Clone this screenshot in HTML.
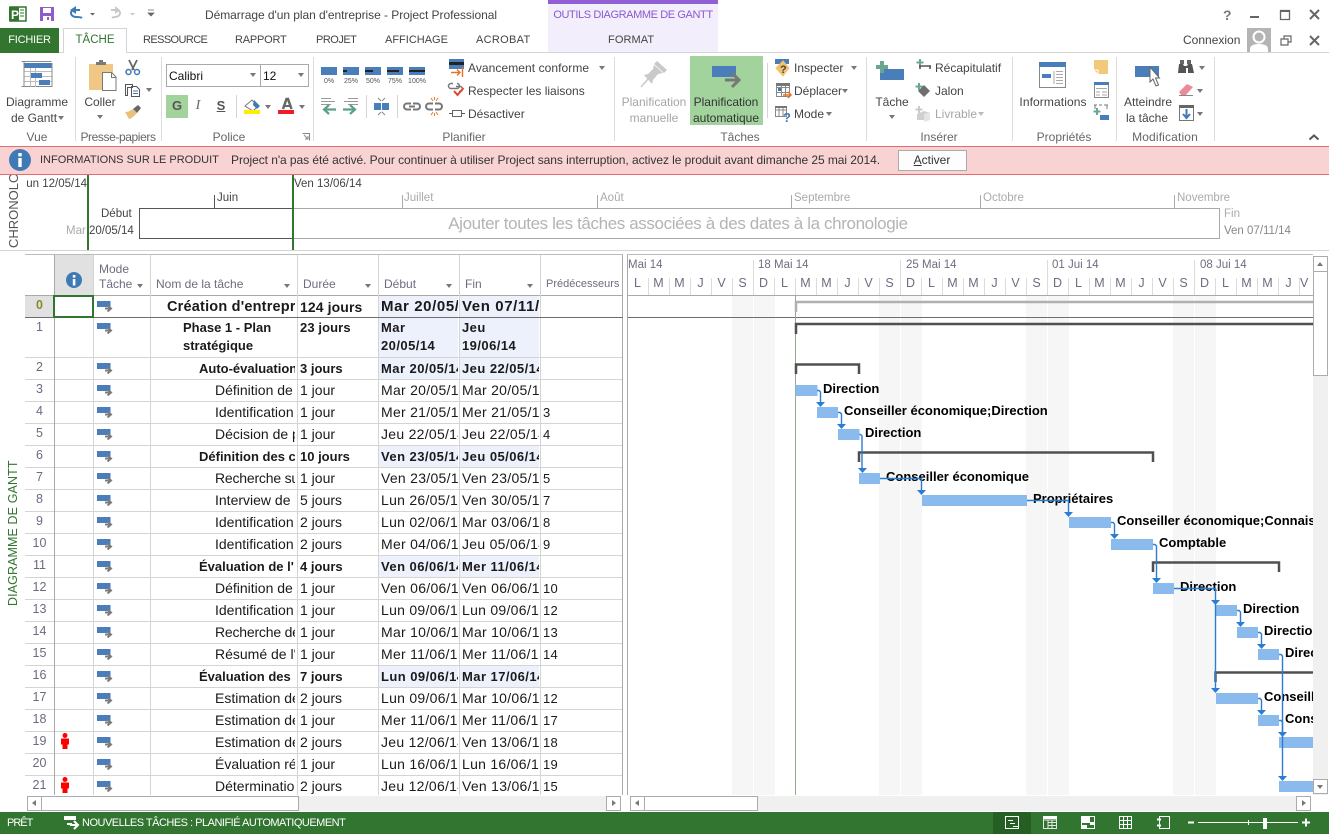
<!DOCTYPE html>
<html lang="fr"><head><meta charset="utf-8"><title>Project Professional</title>
<style>
html,body{margin:0;padding:0;background:#fff}
body{width:1329px;height:834px;overflow:hidden;position:relative;font:12px "Liberation Sans",sans-serif;color:#444}
.t{position:absolute;white-space:nowrap;line-height:16px;height:16px}
.c{text-align:center;transform:translateX(-50%)}
.b{position:absolute}
.a{position:absolute;width:0;height:0;border:3.5px solid transparent;border-top:4px solid #777;border-bottom:0}
svg{position:absolute;overflow:visible}
.g{color:#666;top:129px}
.sep{position:absolute;top:57px;height:84px;width:1px;background:#dcdcdc}
.tab{top:32px;color:#444;font-size:11px}
.r{position:absolute;left:25px;width:598px;height:22px;font-size:14px;color:#1a1a1a}
.r::after{content:"";position:absolute;left:0;right:0;bottom:0;height:1px;background:#d4d4d4}
.r>div{position:absolute;top:0;height:21px;line-height:21px;white-space:nowrap;overflow:hidden}
.r>div.n{left:0;width:29px;text-align:center;color:#6b6b80;font-size:12.5px;line-height:19px;font-weight:normal}
.mi{left:72px;top:5px;width:16px;height:11px}
.na{left:125px;width:145px}
.du{left:275px;width:78px}
.de{left:354px;padding-left:2px;width:77px;letter-spacing:.28px}
.fi{left:435px;padding-left:2px;width:77px;letter-spacing:.28px}
.pr{left:518px;width:70px;font-size:13px;letter-spacing:.3px}
.bd{font-weight:bold;font-size:13px}
.bd .de,.bd .fi{font-size:13px;letter-spacing:.45px;background:#edf1fc}
.v{position:absolute;top:255px;height:540px;width:1px;background:#d4d4d4}
.hd{color:#6d6d80;top:276px}
.dl{position:absolute;top:275px;width:21px;text-align:center;color:#6d6d80;font-size:12.5px;line-height:16px}
.tk{position:absolute;top:278px;height:17px;width:1px;background:#dcdcdc}
.wk{position:absolute;top:257px;white-space:nowrap;color:#6d6d80;line-height:16px;font-size:11.5px}
.sb{position:absolute;background:#fff;border:1px solid #ababab;box-sizing:border-box}
.st{position:absolute;color:#fff;white-space:nowrap;line-height:16px;top:815px;font-size:11px}
.gl{font:bold 13px "Liberation Sans",sans-serif;fill:#000}
</style></head><body>

<svg width="0" height="0" style="position:absolute"><defs>
<symbol id="m" viewBox="0 0 16 11"><rect x="0" y="0" width="13.5" height="6" fill="#4a7ebb"/><path d="M8 7.500h5M10.500 4.500l3.500 3-3.500 3" fill="none" stroke="#7c7c7c" stroke-width="2"/></symbol>
<symbol id="p" viewBox="0 0 12 16"><circle cx="6" cy="2.500" r="2.500" fill="#f00"/><path d="M2 5.500h8v6H8.500v4.500h-5V11.500H2z" fill="#f00"/></symbol>
</defs></svg>

<!-- title bar -->
<svg style="left:0;top:0" width="160" height="28">
<rect x="10" y="7" width="16" height="14" fill="#fff" stroke="#31752f" stroke-width="1.500"/><rect x="9" y="7" width="10" height="14" fill="#31752f"/>
<text x="11" y="19" font-size="12" font-weight="bold" fill="#fff" font-family="Liberation Sans">P</text><path d="M20 10h4M20 13h4M20 16h4" stroke="#31752f"/>
<path d="M40 7h14v14H40z" fill="#8e5dc9"/><rect x="43" y="8" width="8" height="5" fill="#fff"/><rect x="43" y="16" width="8" height="5" fill="#fff"/><rect x="47" y="17" width="2" height="3" fill="#8e5dc9"/>
<path d="M82 18c-1 -1 -4 -1 -6 -1c-3 0 -5 -2 -5 -4c0-2 2-3 4-3h5" fill="none" stroke="#3f7ab5" stroke-width="2"/><path d="M75 6l-6 4 6 4z" fill="#3f7ab5" transform="translate(1,0)"/>
<path d="M90 13h5l-2.500 2.500z" fill="#666"/>
<path d="M112 18c1 -1 2 -1 3 -1c3 0 5 -2 5 -4c0-2 -2-3 -4-3h-5" fill="none" stroke="#c8c8c8" stroke-width="2"/><path d="M115 6l5 4 -5 4z" fill="#c8c8c8"/>
<path d="M130 13h5l-2.500 2.500z" fill="#c8c8c8"/>
<path d="M148 10h6M148 13h6l-3 3z" fill="#666" stroke="#666" stroke-width=".7"/>
</svg>
<div class="t" style="left:205px;top:7px;letter-spacing:-.05px;font-size:12px">Démarrage d'un plan d'entreprise - Project Professional</div>
<div class="b" style="left:548px;top:0;width:170px;height:52px;background:#f3eefb"></div>
<div class="b" style="left:548px;top:0;width:170px;height:4px;background:#8f5fd3"></div>
<div class="t c" style="left:633px;top:7px;color:#8a5ad0;font-size:11px;letter-spacing:-.4px">OUTILS DIAGRAMME DE GANTT</div>
<svg style="left:1215px;top:5px" width="114" height="45" fill="none" stroke="#666" stroke-width="2">
<text x="8" y="15" font-size="14" font-weight="bold" fill="#777" stroke="none" font-family="Liberation Sans">?</text>
<path d="M35 12h9"/><path d="M65.500 5.500h9v9h-9z" stroke-width="1.300"/><path d="M65 6h10" />
<path d="M95 5l9 9M104 5l-9 9"/>
<path d="M66 34h7v6h-7zM69 34v-3h7v6h-3" stroke-width="1.200"/><path d="M95 31l9 9M104 31l-9 9"/></svg>
<!-- tabs -->
<div class="b" style="left:0;top:52px;width:1329px;height:1px;background:#d4d4d4"></div>
<div class="b" style="left:0;top:28px;width:59px;height:25px;background:#31752f"></div>
<div class="t c tab" style="left:29.500px;color:#fff;letter-spacing:-.2px">FICHIER</div>
<div class="b" style="left:63px;top:28px;width:64px;height:25px;border:1px solid #d4d4d4;border-bottom:0;background:#fff;box-sizing:border-box"></div>
<div class="t c tab" style="left:95px;color:#31752f;font-size:11.500px">TÂCHE</div>
<div class="t tab" style="left:143px;letter-spacing:-.6px">RESSOURCE</div>
<div class="t tab" style="left:235px;letter-spacing:-.2px">RAPPORT</div>
<div class="t tab" style="left:316px;letter-spacing:-.5px">PROJET</div>
<div class="t tab" style="left:385px">AFFICHAGE</div>
<div class="t tab" style="left:476px;letter-spacing:.3px">ACROBAT</div>
<div class="t tab" style="left:608px;letter-spacing:.1px">FORMAT</div>
<div class="t" style="left:1183px;top:32px">Connexion</div>
<svg style="left:1247px;top:28px" width="24" height="24"><rect width="24" height="24" fill="#b4b4b4"/><circle cx="12" cy="9" r="5.500" fill="none" stroke="#fff" stroke-width="2"/><path d="M3 24v-3c0-4 5-5 9-5s9 1 9 5v3z" fill="#fff"/></svg>

<!-- ribbon separators -->
<div class="sep" style="left:75px"></div><div class="sep" style="left:161px"></div><div class="sep" style="left:313px"></div><div class="sep" style="left:614px"></div><div class="sep" style="left:866px"></div><div class="sep" style="left:1012px"></div><div class="sep" style="left:1116px"></div><div class="sep" style="left:1214px"></div>
<div class="t g c" style="left:37px">Vue</div>
<div class="t g c" style="left:118px;letter-spacing:-.4px">Presse-papiers</div>
<div class="t g c" style="left:229px">Police</div>
<div class="t g c" style="left:464px">Planifier</div>
<div class="t g c" style="left:740px">Tâches</div>
<div class="t g c" style="left:939px">Insérer</div>
<div class="t g c" style="left:1064px">Propriétés</div>
<div class="t g c" style="left:1165px;letter-spacing:.15px">Modification</div>

<!-- Vue -->
<svg style="left:21px;top:61px" width="32" height="28" fill="none"><path d="M.5 .5h30M3 .500v25M.5 25.500h30" stroke="#8a8a8a"/><rect x="3.500" y="2" width="27.500" height="5" fill="#4a7ebb"/><path d="M3.500 10.500h27M3.500 15.500h27M3.500 20.500h27M9.500 7v19M14.500 7v19" stroke="#bdbdbd"/><rect x="10" y="12" width="11" height="5" fill="#4a7ebb"/><rect x="18" y="19" width="11" height="5" fill="#4a7ebb"/><path d="M31 2v24" stroke="#8a8a8a"/></svg>
<div class="t c" style="left:37px;top:94px">Diagramme</div>
<div class="t" style="left:11px;top:110px">de Gantt</div><div class="a" style="left:58px;top:116px"></div>

<!-- Presse-papiers -->
<svg style="left:88px;top:59px" width="56" height="62">
<rect x="1" y="5" width="24" height="26" fill="#efc885"/><path d="M8 6V3h3V1h4v2h3v3z" fill="#7a7a7a"/>
<path d="M14.500 13.500h9l4.500 4.500v13.500h-13.500z" fill="#fff" stroke="#7a7a7a"/><path d="M23.500 13.500v5h4.500" fill="none" stroke="#7a7a7a"/>
<path d="M41 1l5 10M49 1l-5 10" stroke="#666" stroke-width="1.800" fill="none"/><circle cx="40.500" cy="13" r="2.500" fill="none" stroke="#3f7ab5" stroke-width="1.500"/><circle cx="49" cy="13" r="2.500" fill="none" stroke="#3f7ab5" stroke-width="1.500"/>
<path d="M37.500 25.500h7v3h-5v8h-2zM43.500 27.500h5l3 3v7h-8z" fill="#fff" stroke="#555"/><path d="M45 32h5M45 34.500h5" stroke="#3f7ab5"/>
<path d="M45 50l5-4 3 3-4 5z" fill="#666"/><path d="M37 53c3 0 5-1 8-3l4 4c-3 3-6 6-8 6z" fill="#e9c07b"/>
</svg>
<div class="t c" style="left:100px;top:94px">Coller</div><div class="a" style="left:97px;top:115px"></div>
<div class="a" style="left:146px;top:88px"></div>

<!-- Police -->
<div class="b" style="left:166px;top:64px;width:95px;height:23px;border:1px solid #aaa;box-sizing:border-box"></div>
<div class="b" style="left:260px;top:64px;width:49px;height:23px;border:1px solid #aaa;box-sizing:border-box"></div>
<div class="t" style="left:169px;top:68px;color:#111">Calibri</div><div class="a" style="left:250px;top:73px"></div>
<div class="t" style="left:263px;top:68px;color:#111">12</div><div class="a" style="left:298px;top:73px"></div>
<div class="b" style="left:166px;top:95px;width:22px;height:23px;background:#a3d39c"></div>
<div class="t c" style="left:177px;top:98px;font-weight:bold;color:#555;font-size:13px">G</div>
<div class="t c" style="left:198px;top:98px;font-style:italic;font-family:'Liberation Serif',serif;font-size:14px;color:#666">I</div>
<div class="t c" style="left:221px;top:98px;font-weight:bold;text-decoration:underline;color:#555;font-size:13px">S</div>
<div class="b" style="left:236px;top:95px;width:1px;height:23px;background:#d4d4d4"></div>
<svg style="left:243px;top:97px" width="56" height="22">
<path d="M2 9l7-6 6 6-5 5z" fill="#fff" stroke="#777"/><path d="M11 3l6 6-3 3-4-4z" fill="#3f7ab5"/><rect x="1" y="13" width="16" height="4" fill="#ffed00"/>
<path d="M40 12l3.500-10h1.500l3.500 10" fill="none" stroke="#666" stroke-width="2.500"/><path d="M41 9h6" stroke="#666" stroke-width="2"/><rect x="35" y="13" width="16" height="4" fill="#ee1c25"/></svg>
<div class="a" style="left:265px;top:105px"></div><div class="a" style="left:299px;top:105px"></div>
<svg style="left:302px;top:133px" width="8" height="8"><path d="M.5 .5h7v7M2 2l4 4M6 3v3H3" fill="none" stroke="#888"/></svg>

<!-- Planifier -->
<svg style="left:320px;top:66px" width="108" height="20">
<g fill="#4a7ebb"><rect x="1" y="1" width="16" height="8"/><rect x="23" y="1" width="16" height="8"/><rect x="45" y="1" width="16" height="8"/><rect x="67" y="1" width="16" height="8"/><rect x="89" y="1" width="16" height="8"/></g>
<g fill="#222"><rect x="23" y="4" width="4" height="2"/><rect x="45" y="4" width="8" height="2"/><rect x="67" y="4" width="12" height="2"/><rect x="89" y="4" width="16" height="2"/></g>
<g font-size="7" fill="#555" text-anchor="middle" font-family="Liberation Sans"><text x="9" y="17">0%</text><text x="31" y="17">25%</text><text x="53" y="17">50%</text><text x="75" y="17">75%</text><text x="97" y="17">100%</text></g></svg>
<svg style="left:320px;top:97px" width="125" height="18" fill="none">
<path d="M1 1.500h10M1 4.500h14M1 7.500h10" stroke="#999"/><path d="M16 12.500H5M9 8l-5 4.500 5 4.500" stroke="#5c9f8a" stroke-width="2.200"/>
<path d="M28 1.500h10M24 4.500h14M28 7.500h10" stroke="#999"/><path d="M23 12.500h11M30 8l5 4.500-5 4.500" stroke="#5c9f8a" stroke-width="2.200"/>
<rect x="54" y="6" width="7" height="7" fill="#4a7ebb"/><rect x="62" y="6" width="7" height="7" fill="#4a7ebb"/><path d="M58 1l3 3M65 1l-3 3M58 18l3-3M65 18l-3-3" stroke="#888"/>
<path d="M91 6.500h-4a3 3 0 000 6h4M93 6.500h4a3 3 0 010 6h-4M89 9.500h6" stroke="#777" stroke-width="2"/>
<path d="M113 6.500h-4a3 3 0 000 6h4M115 6.500h4a3 3 0 010 6h-4" stroke="#777" stroke-width="2"/><path d="M111 1l2 3M118 1l-2 3M111 18l2-3M118 18l-2-3M114.500 0v3M114.500 16v3" stroke="#e97b24"/>
</svg>
<div class="b" style="left:366px;top:95px;width:1px;height:23px;background:#d4d4d4"></div>
<div class="b" style="left:397px;top:95px;width:1px;height:23px;background:#d4d4d4"></div>
<svg style="left:448px;top:58px" width="18" height="65" fill="none">
<rect x="1" y="1" width="15" height="10" fill="#4a7ebb"/><rect x="1" y="4" width="15" height="3" fill="#222"/><path d="M3 14.500h9M9 11.500l3 3-3 3M14.500 9v10" stroke="#e9721f" stroke-width="1.400"/>
<path d="M5 25.500h-2a2.500 2.500 0 000 5h6a2.500 2.500 0 000-5M8 28.500h4a2.500 2.500 0 010 5h-1" stroke="#777" stroke-width="1.500"/><path d="M6 33l3.500 4 6-7" stroke="#e2432a" stroke-width="2"/>
<path d="M1 55.500h4M13 55.500h4" stroke="#555"/><rect x="4.500" y="52.500" width="9" height="6" stroke="#666"/></svg>
<div class="t" style="left:468px;top:60px;letter-spacing:.07px">Avancement conforme</div><div class="a" style="left:599px;top:66px"></div>
<div class="t" style="left:468px;top:83px">Respecter les liaisons</div>
<div class="t" style="left:468px;top:106px">Désactiver</div>

<!-- Tâches -->
<svg style="left:640px;top:61px" width="28" height="28"><path d="M14 4l9 8-5 1-5 6-1 4-8-9 4-1 5-5z" fill="#c9c9c9"/><path d="M8 18l-7 8" stroke="#c9c9c9" stroke-width="1.500"/><path d="M17 0l10 9-3 3-10-9z" fill="#c9c9c9"/></svg>
<div class="t c" style="left:654px;top:94px;color:#a6a6a6">Planification</div>
<div class="t c" style="left:654px;top:110px;color:#a6a6a6">manuelle</div>
<div class="b" style="left:690px;top:56px;width:73px;height:69px;background:#a3d39c"></div>
<svg style="left:712px;top:66px" width="30" height="22"><rect width="24" height="11" fill="#4a7ebb"/><path d="M13 14h13M20 7l7 7-7 7" fill="none" stroke="#777" stroke-width="3"/></svg>
<div class="t c" style="left:726px;top:94px;color:#333">Planification</div>
<div class="t c" style="left:726px;top:110px;color:#333">automatique</div>
<div class="b" style="left:767px;top:63px;width:1px;height:55px;background:#d4d4d4"></div>
<svg style="left:774px;top:58px" width="18" height="66" fill="none">
<path d="M1 1h14v5H1z" fill="#4a7ebb"/><path d="M9 3l6 7-6 8-7-8z" fill="#f3c16e" stroke="#f3c16e"/><text x="6" y="15" font-size="11" font-weight="bold" fill="#444" font-family="Liberation Sans">?</text>
<path d="M2.500 25.500h13v13h-13zM2.500 29.500h13M2.500 34.500h13M7.500 25.500v13M11.500 25.500v13" stroke="#888"/><rect x="2" y="25" width="14" height="3" fill="#777"/><rect x="4" y="30" width="3" height="3" fill="#3f7ab5"/><path d="M9 37h8M14 34l3 3-3 3" stroke="#e9721f" stroke-width="1.500"/>
<path d="M1.500 48.500h11v10h-11zM1.500 52h11M5 48.500v10M9 48.500v10" stroke="#888"/><rect x="1" y="48" width="12" height="2" fill="#777"/><text x="9" y="64" font-size="13" font-weight="bold" fill="#3f7ab5" font-family="Liberation Sans">?</text></svg>
<div class="t" style="left:794px;top:60px">Inspecter</div><div class="a" style="left:851px;top:66px"></div>
<div class="t" style="left:794px;top:83px">Déplacer</div><div class="a" style="left:842px;top:89px"></div>
<div class="t" style="left:794px;top:106px">Mode</div><div class="a" style="left:826px;top:112px"></div>

<!-- Insérer -->
<svg style="left:876px;top:60px" width="30" height="22"><rect x="4" y="9" width="24" height="11" fill="#4a7ebb"/><path d="M6 1v12M0 7h12" stroke="#6aa792" stroke-width="4"/></svg>
<div class="t c" style="left:892px;top:94px">Tâche</div><div class="a" style="left:889px;top:115px"></div>
<svg style="left:915px;top:58px" width="20" height="66" fill="none">
<path d="M5 1v7M1.500 4.500h7" stroke="#6aa792" stroke-width="2"/><path d="M4 8h12M5 8v3M15 8v3" stroke="#555" stroke-width="1.600"/>
<path d="M4 25v7M.5 28.500h7" stroke="#6aa792" stroke-width="2"/><path d="M9 27l6 6-6 6-6-6z" fill="#6f6f6f"/>
<path d="M4 48v7M.5 51.500h7" stroke="#c9c9c9" stroke-width="2"/><path d="M2 56l7-3 6 2v7H2z" fill="#cfcfcf"/><path d="M9 56l6-2v8l-6 2z" fill="#e4e4e4"/></svg>
<div class="t" style="left:935px;top:60px">Récapitulatif</div>
<div class="t" style="left:935px;top:83px">Jalon</div>
<div class="t" style="left:935px;top:106px;color:#a6a6a6">Livrable</div><div class="a" style="left:978px;top:112px;border-top-color:#bbb"></div>

<!-- Propriétés -->
<svg style="left:1038px;top:61px" width="30" height="28" fill="none"><rect x="1.500" y="1.500" width="26" height="25" stroke="#888"/><rect x="1" y="1" width="27" height="5" fill="#4a7ebb"/><rect x="4" y="13" width="9" height="4" fill="#4a7ebb"/><path d="M16 10v13M18 10.500h7M18 13.500h7M18 16.500h7M18 19.500h7M18 22.500h7" stroke="#aaa"/></svg>
<div class="t c" style="left:1053px;top:94px;letter-spacing:.1px">Informations</div>
<svg style="left:1093px;top:59px" width="18" height="63" fill="none">
<path d="M1 1h14v14H5l-4-4z" fill="#f0c97d"/><path d="M1 11h4v4" stroke="#fff" />
<rect x="1.500" y="23.500" width="14" height="15" stroke="#888" fill="#fff"/><rect x="1" y="23" width="15" height="3" fill="#4a7ebb"/><path d="M3 29.500h11M3 33h4M9 33h5M3 36h4M9 36h5" stroke="#aaa"/>
<path d="M1 46h3M6 46h3M11 46h4M2 46v4M14 46v4" stroke="#777"/><path d="M4 49v7M.500 52.500h7" stroke="#6aa792" stroke-width="2"/><rect x="7" y="56" width="9" height="5" fill="#4a7ebb"/></svg>

<!-- Modification -->
<svg style="left:1135px;top:66px" width="28" height="22"><rect width="24" height="11" fill="#4a7ebb"/><path d="M15 1v15l3-3 3 7 2.500-1-3-7h4z" fill="#fff" stroke="#666"/></svg>
<div class="t c" style="left:1148px;top:94px">Atteindre</div><div class="t c" style="left:1147px;top:110px">la tâche</div>
<svg style="left:1177px;top:59px" width="20" height="64" fill="none">
<path d="M2 5h4l1 2h3l1-2h4l2 9H11V9H9v5H1z" fill="#555"/><rect x="3" y="1" width="4" height="4" fill="#666"/><rect x="10" y="1" width="4" height="4" fill="#666"/>
<path d="M2 33l8-8 6 3-8 9H5z" fill="#ea8a9a"/><path d="M2 36.500h14" stroke="#888"/>
<rect x="2.500" y="46.500" width="14" height="15" stroke="#777" fill="#fff"/><rect x="2" y="46" width="15" height="3" fill="#666"/><path d="M9.500 50v8M6 55l3.500 4 3.500-4" stroke="#3f7ab5" stroke-width="2"/></svg>
<div class="a" style="left:1199px;top:66px"></div><div class="a" style="left:1197px;top:89px"></div><div class="a" style="left:1197px;top:112px"></div>
<svg style="left:1308px;top:133px" width="12" height="8"><path d="M1.500 6.500l4.500-4 4.500 4" fill="none" stroke="#555" stroke-width="2"/></svg>

<!-- banner -->
<div class="b" style="left:0;top:146px;width:1329px;height:29px;background:#f9d3d3;border-top:1px solid #e46c6c;border-bottom:1px solid #e46c6c;box-sizing:border-box"></div>
<svg style="left:9px;top:149px" width="22" height="22"><circle cx="11" cy="11" r="11" fill="#3f7ab5"/><rect x="9.300" y="4" width="3.400" height="3.400" fill="#fff"/><rect x="9.300" y="9" width="3.400" height="9" fill="#fff"/></svg>
<div class="t" style="left:40px;top:152px;color:#333;font-size:11px">INFORMATIONS SUR LE PRODUIT</div>
<div class="t" style="left:231px;top:152px;color:#333;letter-spacing:-.06px">Project n'a pas été activé. Pour continuer à utiliser Project sans interruption, activez le produit avant dimanche 25 mai 2014.</div>
<div class="b" style="left:898px;top:150px;width:69px;height:21px;background:#fdfdfd;border:1px solid #ababab;box-sizing:border-box"></div>
<div class="t c" style="left:932px;top:152px;color:#333"><u>A</u>ctiver</div>

<!-- chrono -->
<div class="b" style="left:139px;top:208px;width:1081px;height:31px;border:1px solid #a9a9a9;box-sizing:border-box"></div>
<div class="b" style="left:139px;top:208px;width:154px;height:31px;border:1px solid #555;border-right:0;box-sizing:border-box"></div>
<div class="b" style="left:214px;top:195px;width:1px;height:13px;background:#555"></div>
<div class="b" style="left:402px;top:195px;width:1px;height:13px;background:#aaa"></div>
<div class="b" style="left:597px;top:195px;width:1px;height:13px;background:#aaa"></div>
<div class="b" style="left:791px;top:195px;width:1px;height:13px;background:#aaa"></div>
<div class="b" style="left:980px;top:195px;width:1px;height:13px;background:#aaa"></div>
<div class="b" style="left:1174px;top:195px;width:1px;height:13px;background:#aaa"></div>
<div class="b" style="left:87px;top:175px;width:2px;height:75px;background:#31752f"></div>
<div class="b" style="left:292px;top:175px;width:2px;height:75px;background:#31752f"></div>
<div class="b" style="left:26px;top:176px;width:61px;height:16px;overflow:hidden"><div class="t" style="right:0;top:0;font-size:11.500px">Lun 12/05/14</div></div>
<div class="t" style="left:294px;top:176px;font-size:11.500px">Ven 13/06/14</div>
<div class="t" style="left:217px;top:190px;font-size:11.500px">Juin</div>
<div class="t" style="left:404px;top:190px;font-size:11.500px;color:#aaa">Juillet</div>
<div class="t" style="left:600px;top:190px;font-size:11.500px;color:#aaa">Août</div>
<div class="t" style="left:794px;top:190px;font-size:11.500px;color:#aaa">Septembre</div>
<div class="t" style="left:983px;top:190px;font-size:11.500px;color:#aaa">Octobre</div>
<div class="t" style="left:1177px;top:190px;font-size:11.500px;color:#aaa">Novembre</div>
<div class="t" style="left:101px;top:206px;font-size:11.500px">Début</div>
<div class="t" style="left:66px;top:223px;font-size:11.500px;color:#aaa">Mar</div>
<div class="t" style="left:89px;top:223px;font-size:11.500px">20/05/14</div>
<div class="t" style="left:1224px;top:206px;font-size:11.500px;color:#aaa">Fin</div>
<div class="t" style="left:1224px;top:223px;font-size:11.500px;color:#888">Ven 07/11/14</div>
<div class="t c" style="left:678px;top:214px;height:20px;line-height:20px;font-size:17px;letter-spacing:-.38px;color:#b4b4b4">Ajouter toutes les tâches associées à des dates à la chronologie</div>
<div class="b" style="left:0;top:250px;width:1329px;height:1px;background:#d4d4d4"></div>
<div class="b" style="left:0;top:175px;width:25px;height:75px;overflow:hidden"><div class="t" style="left:6px;top:73px;transform-origin:0 0;transform:rotate(-90deg);font-size:13px;color:#555">CHRONOLOGIE</div></div>
<div class="t" style="left:5px;top:606px;transform-origin:0 0;transform:rotate(-90deg);font-size:12.500px;color:#31752f;letter-spacing:.1px">DIAGRAMME DE GANTT</div>

<!-- grid header -->
<div class="b" style="left:25px;top:254px;width:598px;height:1px;background:#bcbcbc"></div>
<div class="b" style="left:54px;top:255px;width:40px;height:40px;background:#e1e1e1"></div>
<div class="b" style="left:25px;top:295px;width:598px;height:1px;background:#a9a9a9"></div>
<svg style="left:66px;top:272px" width="16" height="16"><circle cx="8" cy="8" r="8" fill="#3f7ab5"/><rect x="6.800" y="3" width="2.600" height="2.600" fill="#fff"/><rect x="6.800" y="7" width="2.600" height="6.500" fill="#fff"/></svg>
<div class="t hd" style="left:99px;top:261px">Mode</div><div class="t hd" style="left:99px">Tâche</div>
<div class="t hd" style="left:156px">Nom de la tâche</div><div class="t hd" style="left:303px">Durée</div><div class="t hd" style="left:384px">Début</div><div class="t hd" style="left:465px">Fin</div><div class="t hd" style="left:546px;font-size:11px">Prédécesseurs</div>
<div class="a" style="left:137px;top:284px"></div><div class="a" style="left:284px;top:284px"></div><div class="a" style="left:365px;top:284px"></div><div class="a" style="left:446px;top:284px"></div><div class="a" style="left:527px;top:284px"></div>

<!-- rows -->
<div class="b" style="left:25px;top:296px;width:29px;height:21px;background:#e1e1e1"></div>
<div class="r bd" style="top:296px"><div class="n" style="font-weight:bold;color:#8a8a2a">0</div><svg class="mi"><use href="#m"/></svg><div class="na" style="left:142px;width:128px;font-size:14.500px;letter-spacing:.2px;line-height:22px">Création d'entreprise</div><div class="du" style="font-size:14px;letter-spacing:.1px;line-height:22px">124 jours</div><div class="de" style="font-size:15px;letter-spacing:.6px;line-height:22px">Mar 20/05/14</div><div class="fi" style="font-size:15px;letter-spacing:.6px;line-height:22px">Ven 07/11/14</div></div>
<div class="b" style="left:25px;top:317px;width:598px;height:1px;background:#6e6e6e;z-index:2"></div>
<div class="r bd" style="top:318px;height:40px"><div class="n">1</div><svg class="mi"><use href="#m"/></svg><div class="na" style="left:158px;width:112px;height:39px;white-space:normal;line-height:18px;top:1px">Phase 1 - Plan stratégique</div><div class="du" style="line-height:18px;top:1px;letter-spacing:.1px">23 jours</div><div class="de" style="white-space:normal;line-height:18px;padding-top:1px;height:38px">Mar<br>20/05/14</div><div class="fi" style="white-space:normal;line-height:18px;padding-top:1px;height:38px">Jeu<br>19/06/14</div></div>
<div class="r bd" style="top:358px"><div class="n">2</div><svg class="mi"><use href="#m"/></svg><div class="na" style="left:174px;width:96px">Auto-évaluation</div><div class="du">3 jours</div><div class="de">Mar 20/05/14</div><div class="fi">Jeu 22/05/14</div></div>
<div class="r" style="top:380px"><div class="n">3</div><svg class="mi"><use href="#m"/></svg><div class="na" style="left:190px;width:80px">Définition de</div><div class="du">1 jour</div><div class="de">Mar 20/05/14</div><div class="fi">Mar 20/05/14</div></div>
<div class="r" style="top:402px"><div class="n">4</div><svg class="mi"><use href="#m"/></svg><div class="na" style="left:190px;width:80px">Identification</div><div class="du">1 jour</div><div class="de">Mer 21/05/14</div><div class="fi">Mer 21/05/14</div><div class="pr">3</div></div>
<div class="r" style="top:424px"><div class="n">5</div><svg class="mi"><use href="#m"/></svg><div class="na" style="left:190px;width:80px">Décision de p</div><div class="du">1 jour</div><div class="de">Jeu 22/05/14</div><div class="fi">Jeu 22/05/14</div><div class="pr">4</div></div>
<div class="r bd" style="top:446px"><div class="n">6</div><svg class="mi"><use href="#m"/></svg><div class="na" style="left:174px;width:96px">Définition des c</div><div class="du">10 jours</div><div class="de">Ven 23/05/14</div><div class="fi">Jeu 05/06/14</div></div>
<div class="r" style="top:468px"><div class="n">7</div><svg class="mi"><use href="#m"/></svg><div class="na" style="left:190px;width:80px;letter-spacing:-.2px">Recherche su</div><div class="du">1 jour</div><div class="de">Ven 23/05/14</div><div class="fi">Ven 23/05/14</div><div class="pr">5</div></div>
<div class="r" style="top:490px"><div class="n">8</div><svg class="mi"><use href="#m"/></svg><div class="na" style="left:190px;width:80px">Interview de</div><div class="du">5 jours</div><div class="de">Lun 26/05/14</div><div class="fi">Ven 30/05/14</div><div class="pr">7</div></div>
<div class="r" style="top:512px"><div class="n">9</div><svg class="mi"><use href="#m"/></svg><div class="na" style="left:190px;width:80px">Identification</div><div class="du">2 jours</div><div class="de">Lun 02/06/14</div><div class="fi">Mar 03/06/14</div><div class="pr">8</div></div>
<div class="r" style="top:534px"><div class="n">10</div><svg class="mi"><use href="#m"/></svg><div class="na" style="left:190px;width:80px">Identification</div><div class="du">2 jours</div><div class="de">Mer 04/06/14</div><div class="fi">Jeu 05/06/14</div><div class="pr">9</div></div>
<div class="r bd" style="top:556px"><div class="n">11</div><svg class="mi"><use href="#m"/></svg><div class="na" style="left:174px;width:96px">Évaluation de l'</div><div class="du">4 jours</div><div class="de">Ven 06/06/14</div><div class="fi">Mer 11/06/14</div></div>
<div class="r" style="top:578px"><div class="n">12</div><svg class="mi"><use href="#m"/></svg><div class="na" style="left:190px;width:80px">Définition de</div><div class="du">1 jour</div><div class="de">Ven 06/06/14</div><div class="fi">Ven 06/06/14</div><div class="pr">10</div></div>
<div class="r" style="top:600px"><div class="n">13</div><svg class="mi"><use href="#m"/></svg><div class="na" style="left:190px;width:80px">Identification</div><div class="du">1 jour</div><div class="de">Lun 09/06/14</div><div class="fi">Lun 09/06/14</div><div class="pr">12</div></div>
<div class="r" style="top:622px"><div class="n">14</div><svg class="mi"><use href="#m"/></svg><div class="na" style="left:190px;width:80px;letter-spacing:-.2px">Recherche de</div><div class="du">1 jour</div><div class="de">Mar 10/06/14</div><div class="fi">Mar 10/06/14</div><div class="pr">13</div></div>
<div class="r" style="top:644px"><div class="n">15</div><svg class="mi"><use href="#m"/></svg><div class="na" style="left:190px;width:80px">Résumé de l'</div><div class="du">1 jour</div><div class="de">Mer 11/06/14</div><div class="fi">Mer 11/06/14</div><div class="pr">14</div></div>
<div class="r bd" style="top:666px"><div class="n">16</div><svg class="mi"><use href="#m"/></svg><div class="na" style="left:174px;width:96px">Évaluation des r</div><div class="du">7 jours</div><div class="de">Lun 09/06/14</div><div class="fi">Mar 17/06/14</div></div>
<div class="r" style="top:688px"><div class="n">17</div><svg class="mi"><use href="#m"/></svg><div class="na" style="left:190px;width:80px">Estimation de</div><div class="du">2 jours</div><div class="de">Lun 09/06/14</div><div class="fi">Mar 10/06/14</div><div class="pr">12</div></div>
<div class="r" style="top:710px"><div class="n">18</div><svg class="mi"><use href="#m"/></svg><div class="na" style="left:190px;width:80px">Estimation de</div><div class="du">1 jour</div><div class="de">Mer 11/06/14</div><div class="fi">Mer 11/06/14</div><div class="pr">17</div></div>
<div class="r" style="top:732px"><div class="n">19</div><svg style="left:34px;top:1px" width="12" height="16"><use href="#p"/></svg><svg class="mi"><use href="#m"/></svg><div class="na" style="left:190px;width:80px">Estimation de</div><div class="du">2 jours</div><div class="de">Jeu 12/06/14</div><div class="fi">Ven 13/06/14</div><div class="pr">18</div></div>
<div class="r" style="top:754px"><div class="n">20</div><svg class="mi"><use href="#m"/></svg><div class="na" style="left:190px;width:80px">Évaluation ré</div><div class="du">1 jour</div><div class="de">Lun 16/06/14</div><div class="fi">Lun 16/06/14</div><div class="pr">19</div></div>
<div class="b" style="left:25px;top:776px;width:598px;height:19px;overflow:hidden"><div class="r" style="top:0;left:0"><div class="n">21</div><svg style="left:34px;top:1px" width="12" height="16"><use href="#p"/></svg><svg class="mi"><use href="#m"/></svg><div class="na" style="left:190px;width:80px">Détermination</div><div class="du">2 jours</div><div class="de">Jeu 12/06/14</div><div class="fi">Ven 13/06/14</div><div class="pr">15</div></div></div>

<div class="v" style="left:54px;background:#a9a9a9"></div><div class="v" style="left:93px"></div><div class="v" style="left:150px"></div><div class="v" style="left:297px"></div><div class="v" style="left:378px"></div><div class="v" style="left:459px"></div><div class="v" style="left:540px"></div><div class="v" style="left:622px;background:#a9a9a9"></div>
<div class="b" style="left:53px;top:295px;width:41px;height:23px;border:2px solid #31752f;box-sizing:border-box;z-index:3"></div>

<!-- gantt header -->
<div class="b" style="left:627px;top:254px;width:686px;height:1px;background:#bcbcbc"></div>
<div class="b" style="left:627px;top:255px;width:1px;height:540px;background:#a9a9a9"></div>
<div class="b" style="left:628px;top:295px;width:685px;height:1px;background:#a9a9a9"></div>
<div class="wk" style="left:628px">Mai 14</div><div class="wk" style="left:758px">18 Mai 14</div><div class="wk" style="left:906px">25 Mai 14</div><div class="wk" style="left:1052px">01 Jui 14</div><div class="wk" style="left:1200px">08 Jui 14</div>
<div class="b" style="left:753px;top:260px;width:1px;height:35px;background:#dcdcdc"></div><div class="b" style="left:900px;top:260px;width:1px;height:35px;background:#dcdcdc"></div><div class="b" style="left:1047px;top:260px;width:1px;height:35px;background:#dcdcdc"></div><div class="b" style="left:1194px;top:260px;width:1px;height:35px;background:#dcdcdc"></div>
<div class="tk" style="left:648px"></div><div class="tk" style="left:669px"></div><div class="tk" style="left:690px"></div><div class="tk" style="left:711px"></div><div class="tk" style="left:732px"></div><div class="tk" style="left:774px"></div><div class="tk" style="left:795px"></div><div class="tk" style="left:816px"></div><div class="tk" style="left:837px"></div><div class="tk" style="left:858px"></div><div class="tk" style="left:879px"></div><div class="tk" style="left:921px"></div><div class="tk" style="left:942px"></div><div class="tk" style="left:963px"></div><div class="tk" style="left:984px"></div><div class="tk" style="left:1005px"></div><div class="tk" style="left:1026px"></div><div class="tk" style="left:1068px"></div><div class="tk" style="left:1089px"></div><div class="tk" style="left:1110px"></div><div class="tk" style="left:1131px"></div><div class="tk" style="left:1152px"></div><div class="tk" style="left:1173px"></div><div class="tk" style="left:1215px"></div><div class="tk" style="left:1236px"></div><div class="tk" style="left:1257px"></div><div class="tk" style="left:1278px"></div><div class="tk" style="left:1299px"></div>
<div class="dl" style="left:627px">L</div><div class="dl" style="left:648px">M</div><div class="dl" style="left:669px">M</div><div class="dl" style="left:690px">J</div><div class="dl" style="left:711px">V</div><div class="dl" style="left:732px">S</div><div class="dl" style="left:753px">D</div>
<div class="dl" style="left:774px">L</div><div class="dl" style="left:795px">M</div><div class="dl" style="left:816px">M</div><div class="dl" style="left:837px">J</div><div class="dl" style="left:858px">V</div><div class="dl" style="left:879px">S</div><div class="dl" style="left:900px">D</div>
<div class="dl" style="left:921px">L</div><div class="dl" style="left:942px">M</div><div class="dl" style="left:963px">M</div><div class="dl" style="left:984px">J</div><div class="dl" style="left:1005px">V</div><div class="dl" style="left:1026px">S</div><div class="dl" style="left:1047px">D</div>
<div class="dl" style="left:1068px">L</div><div class="dl" style="left:1089px">M</div><div class="dl" style="left:1110px">M</div><div class="dl" style="left:1131px">J</div><div class="dl" style="left:1152px">V</div><div class="dl" style="left:1173px">S</div><div class="dl" style="left:1194px">D</div>
<div class="dl" style="left:1215px">L</div><div class="dl" style="left:1236px">M</div><div class="dl" style="left:1257px">M</div><div class="dl" style="left:1278px">J</div><div class="dl" style="left:1296px;width:17px;overflow:hidden;text-align:left;text-indent:4px">V</div>

<!-- gantt body -->
<div class="b" style="left:628px;top:296px;width:685px;height:499px;overflow:hidden">
<svg style="left:-628px;top:-296px" width="1329" height="834" fill="none">
<g fill="#f6f6f6"><rect x="732" y="296" width="21" height="499"/><rect x="754" y="296" width="21" height="499"/><rect x="879" y="296" width="21" height="499"/><rect x="901" y="296" width="21" height="499"/><rect x="1026" y="296" width="21" height="499"/><rect x="1048" y="296" width="21" height="499"/><rect x="1173" y="296" width="21" height="499"/><rect x="1195" y="296" width="21" height="499"/></g>
<path d="M628 317.500H1313" stroke="#6e6e6e"/>
<path d="M795.500 296V795" stroke="#8fae8a"/>
<path d="M796 312V302H1313" stroke="#b0b0b0" stroke-width="2.500"/>
<g stroke="#505050" stroke-width="2.500"><path d="M796 334V324H1313"/><path d="M796 374V364.500H859V374"/><path d="M859 462V452.500H1153V462"/><path d="M1153 572V562.500H1279V572"/><path d="M1215.500 682V672.500H1313"/></g>
<g fill="#8bbaec"><rect x="795.500" y="385" width="22" height="11"/><rect x="817" y="407" width="21" height="11"/><rect x="838" y="429" width="21.500" height="11"/><rect x="859" y="473" width="21" height="11"/><rect x="922" y="495" width="105" height="11"/><rect x="1069" y="517" width="42" height="11"/><rect x="1111" y="539" width="42" height="11"/><rect x="1153" y="583" width="21" height="11"/><rect x="1216" y="605" width="21" height="11"/><rect x="1237" y="627" width="21" height="11"/><rect x="1258" y="649" width="21" height="11"/><rect x="1216" y="693" width="42" height="11"/><rect x="1258" y="715" width="21" height="11"/><rect x="1279" y="737" width="34" height="11"/><rect x="1279" y="781" width="34" height="11"/></g>
<g class="gl" stroke="none">
<text class="gl" x="823" y="393">Direction</text>
<text class="gl" x="844" y="415">Conseiller économique;Direction</text>
<text class="gl" x="865" y="437">Direction</text>
<text class="gl" x="886" y="481">Conseiller économique</text>
<text class="gl" x="1033" y="503">Propriétaires</text>
<text class="gl" x="1117" y="525">Conseiller économique;Connaissance</text>
<text class="gl" x="1159" y="547">Comptable</text>
<text class="gl" x="1180" y="591">Direction</text>
<text class="gl" x="1243" y="613">Direction</text>
<text class="gl" x="1264" y="635">Direction</text>
<text class="gl" x="1285" y="657">Direction</text>
<text class="gl" x="1264" y="701">Conseiller</text>
<text class="gl" x="1285" y="723">Conseiller</text>
</g>
<g stroke="#2b7cd3" stroke-width="1.400">
<path d="M817 390.500h2l1.500 1.500V402"/><path d="M838 412.500h2l1.500 1.500V424"/><path d="M859.500 434.500h1l1.500 1.500V468"/>
<path d="M880 478.500H921.500V490"/><path d="M1027 500.500H1068.500V512"/><path d="M1111 522.500h2l1.500 1.500V534"/><path d="M1153 544.500h2l1.500 1.500V578"/>
<path d="M1174 588.500H1215.500V688"/><path d="M1237 610.500h2l1.500 1.500V622"/><path d="M1258 632.500h2l1.500 1.500V644"/><path d="M1279 654.500h2l1.500 1.500V776"/>
<path d="M1258 698.500h2l1.500 1.500V710"/><path d="M1279 720.500h2l1.500 1.500V732"/>
</g>
<g fill="#2b7cd3"><path d="M816 402h9l-4.500 5z"/><path d="M837 424h9l-4.500 5z"/><path d="M858 468h9l-4.500 5z"/><path d="M917 490h9l-4.500 5z"/><path d="M1064 512h9l-4.500 5z"/><path d="M1110 534h9l-4.500 5z"/><path d="M1152 578h9l-4.500 5z"/><path d="M1211 600h9l-4.500 5z"/><path d="M1236 622h9l-4.500 5z"/><path d="M1257 644h9l-4.500 5z"/><path d="M1211 688h9l-4.500 5z"/><path d="M1257 710h9l-4.500 5z"/><path d="M1278 732h9l-4.500 5z"/><path d="M1278 776h9l-4.500 5z"/></g>
</svg></div>

<!-- scrollbars -->
<div class="b" style="left:1313px;top:256px;width:15px;height:539px;background:#f0f0f0"></div>
<div class="sb" style="left:1313px;top:256px;width:15px;height:16px"></div><div class="a" style="left:1317px;top:262px;border-top:0;border-bottom:4px solid #777"></div>
<div class="sb" style="left:1313px;top:271px;width:15px;height:105px"></div>
<div class="sb" style="left:1313px;top:779px;width:15px;height:15px"></div><div class="a" style="left:1317px;top:785px"></div>
<div class="b" style="left:27px;top:796px;width:594px;height:15px;background:#f0f0f0"></div>
<div class="sb" style="left:27px;top:796px;width:15px;height:15px"></div><div class="a" style="left:32px;top:800px;border:3.500px solid transparent;border-right:4px solid #777;border-left:0"></div>
<div class="sb" style="left:41px;top:796px;width:258px;height:15px"></div>
<div class="sb" style="left:606px;top:796px;width:15px;height:15px"></div><div class="a" style="left:612px;top:800px;border:3.500px solid transparent;border-left:4px solid #777;border-right:0"></div>
<div class="b" style="left:630px;top:796px;width:681px;height:15px;background:#f0f0f0"></div>
<div class="sb" style="left:630px;top:796px;width:15px;height:15px"></div><div class="a" style="left:635px;top:800px;border:3.500px solid transparent;border-right:4px solid #777;border-left:0"></div>
<div class="sb" style="left:644px;top:796px;width:114px;height:15px"></div>
<div class="sb" style="left:1296px;top:796px;width:15px;height:15px"></div><div class="a" style="left:1302px;top:800px;border:3.500px solid transparent;border-left:4px solid #777;border-right:0"></div>

<!-- status bar -->
<div class="b" style="left:0;top:812px;width:1329px;height:22px;background:#327530"></div>
<div class="b" style="left:993px;top:812px;width:38px;height:22px;background:#265f23"></div>
<div class="st" style="left:7px;letter-spacing:-1px">PRÊT</div>
<svg style="left:64px;top:816px" width="16" height="14"><rect x="0" y="0" width="12" height="4" fill="#fff"/><rect x="3" y="7" width="5" height="2" fill="#fff"/><path d="M6 9h7M10 5l4 4-4 4" fill="none" stroke="#fff" stroke-width="2"/></svg>
<div class="st" style="left:82px;letter-spacing:-.5px">NOUVELLES TÂCHES : PLANIFIÉ AUTOMATIQUEMENT</div>
<svg style="left:1000px;top:812px" width="320" height="22" fill="none" stroke="#fff">
<path d="M5.500 4.500h13v12h-13zM8 8.500h5M10 11.500h5M13 14.500h5"/>
<path d="M43.500 4.500h13v12h-13zM48 8v8.500M52 8v8.500M48 10.500h8.500M48 13.500h8.500M43.500 8h13" stroke="#e6e6e6"/><rect x="43" y="4" width="14" height="3" fill="#fff" stroke="none"/>
<path d="M81.500 4.500h13v12h-13zM81.500 10.500h13"/><rect x="82" y="5" width="8" height="5" fill="#fff" stroke="none"/><rect x="90" y="10" width="5" height="3" fill="#fff" stroke="none"/><rect x="82" y="13" width="5" height="3" fill="#fff" stroke="none"/>
<path d="M119.500 4.500h12v12h-12zM123.500 4.500v12M127.500 4.500v12M119.500 8.500h12M119.500 12.500h12"/>
<path d="M159.500 4.500h10v12h-10z"/><path d="M157 7.500h4M157 13.500h4" stroke-width="2"/>
<path d="M188 10.500h6" stroke-width="2"/><path d="M198 10.500h100" stroke-width="1"/><path d="M248.500 8v5"/><rect x="263" y="6" width="4" height="11" fill="#fff" stroke="none"/><path d="M302 10.500h8M306 6.500v8" stroke-width="2"/>
</svg>
</body></html>
